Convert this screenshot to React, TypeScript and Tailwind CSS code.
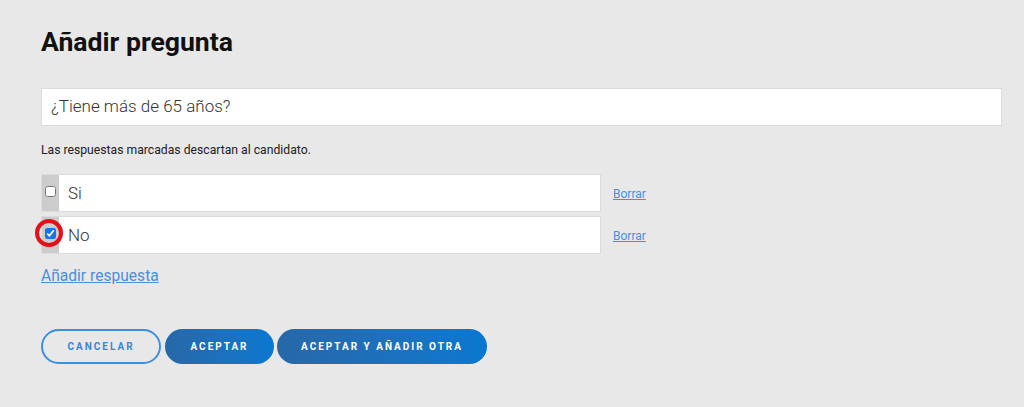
import React from "react";

const font = { fontFamily: "Roboto, 'Noto Sans', sans-serif" };

function Row({ label, checked }: { label: string; checked?: boolean }) {
  return (
    <div className="flex items-center h-[38px]">
      <div className="relative flex h-[38px] w-[560px] bg-[#cccccc] border border-[#dcdcdc]">
        <div className="w-[17px] flex justify-center pt-[11px]">
          <input
            type="checkbox"
            defaultChecked={checked}
            className="w-[11px] h-[11px] m-0 accent-[#1a73e8]"
          />
        </div>
        {checked && (
          <div className="absolute left-[-7px] top-[2px] w-[28px] h-[28px] rounded-full border-4 border-[#e3101a]" />
        )}
        <div className="flex-1 bg-white flex items-center pl-[9px] pt-[1px] text-[17px] font-light text-[#333]">{label}</div>
      </div>
      <a className="ml-[12px] text-[12px] text-[#4a8fd8] underline mt-[1px]">Borrar</a>
    </div>
  );
}

export default function App() {
  return (
    <div className="min-h-[407px] w-full bg-[#e8e8e8] px-[41px] pt-[27px] pr-[22px]" style={font}>
      <h1 className="text-[26.6px] font-bold text-[#111] leading-[30px]">Añadir pregunta</h1>
      <div className="mt-[31px] h-[38px] bg-white border border-[#dcdcdc] flex items-center pl-[9px] text-[17px] font-light text-[#333]">
        ¿Tiene más de 65 años?
      </div>
      <p className="mt-[15px] text-[12.2px] text-[#222] leading-[18px]">Las respuestas marcadas descartan al candidato.</p>
      <div className="mt-[15px] flex flex-col gap-[4px]">
        <Row label="Si" />
        <Row label="No" checked />
      </div>
      <a className="block mt-[10px] text-[15.6px] text-[#4a8fd8] underline leading-[24px]">Añadir respuesta</a>
      <div className="mt-[41px] flex">
        <button className="w-[120px] h-[35px] rounded-full border-2 border-[#3d8fe0] text-[#3a86d6] text-[10px] font-bold tracking-[0.2em] bg-transparent">
          CANCELAR
        </button>
        <button className="ml-[4px] w-[109px] h-[35px] rounded-full bg-gradient-to-r from-[#2768a8] to-[#0878d0] text-white text-[10px] font-bold tracking-[0.2em]">
          ACEPTAR
        </button>
        <button className="ml-[3px] w-[210px] h-[35px] rounded-full bg-gradient-to-r from-[#2768a8] to-[#0878d0] text-white text-[10px] font-bold tracking-[0.2em]">
          ACEPTAR Y AÑADIR OTRA
        </button>
      </div>
    </div>
  );
}
